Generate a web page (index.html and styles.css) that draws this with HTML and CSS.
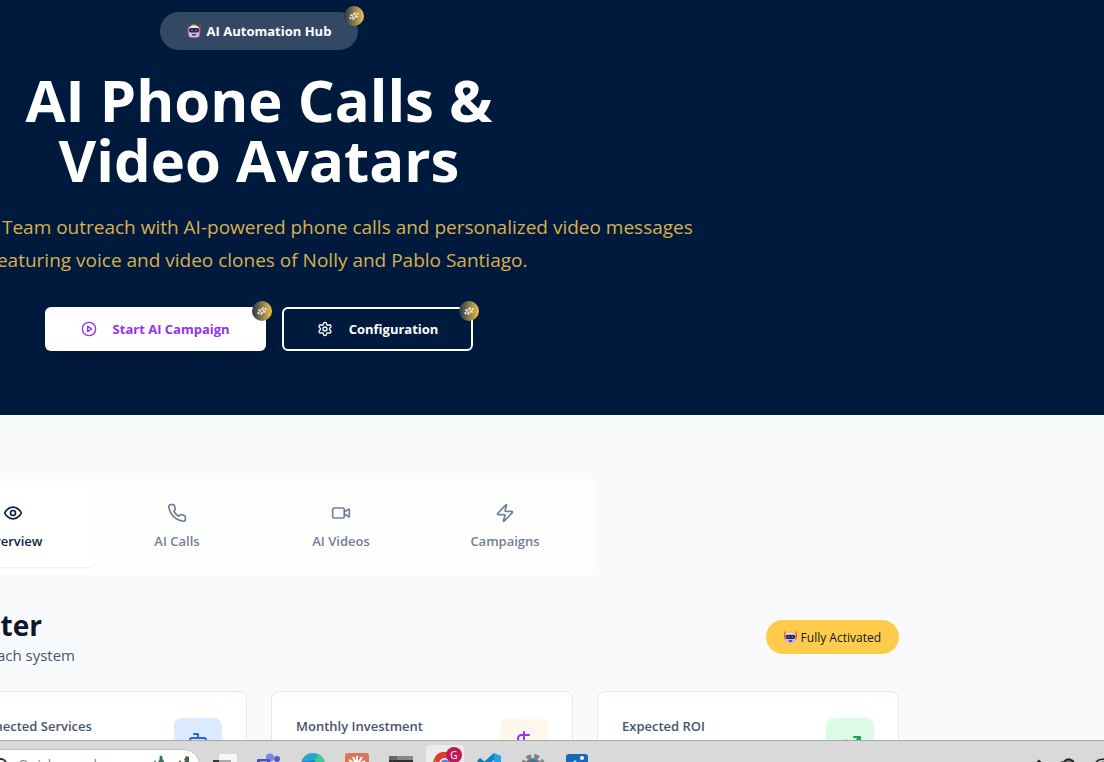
FILE: index.html
```html
<!DOCTYPE html>
<html lang="en">
<head>
<meta charset="utf-8">
<title>AI Automation Hub</title>
<link rel="stylesheet" href="styles.css">
</head>
<body>
<svg class="defs" aria-hidden="true">
  <symbol id="sparkle" viewBox="0 0 24 24"><g transform="rotate(105 12 12)" fill="none" stroke="currentColor" stroke-width="2.4" stroke-linecap="round" stroke-linejoin="round"><path d="m12 3-1.9 5.8a2 2 0 0 1-1.3 1.3L3 12l5.8 1.9a2 2 0 0 1 1.3 1.3L12 21l1.9-5.8a2 2 0 0 1 1.3-1.3L21 12l-5.8-1.9a2 2 0 0 1-1.3-1.3L12 3Z"/><path d="M5 3v4M19 17v4M3 5h4M17 19h4"/></g></symbol>
  <symbol id="robot" viewBox="0 0 28 28">
    <path d="M2 1v12M26 1v12" stroke="#d3245c" stroke-width="2"/>
    <path d="M1 9h4v11H3q-2-2-2-5zM27 9h-4v11h2q2-2 2-5z" fill="#c63868"/>
    <path d="M7 5q1-4 7-4t7 4z" fill="#f9b233"/>
    <rect x="3" y="4" width="22" height="23" rx="6" fill="#cdb6e6"/>
    <path d="M6 6q8-4 16 0v3H6z" fill="#eee4f8"/>
    <rect x="4" y="8" width="20" height="9" rx="4" fill="#29233f"/>
    <circle cx="10" cy="12.500" r="2" fill="#2f8cd8"/><circle cx="18" cy="12.500" r="2" fill="#2f8cd8"/>
    <rect x="10" y="20" width="8" height="3" rx="1.500" fill="#3b2a50"/>
  </symbol>
</svg>

<div class="screen">
  <header class="hero">
    <div class="container hero-inner">
      <div class="pill"><svg class="robot"><use href="#robot"/></svg>AI Automation Hub<span class="spark"><svg><use href="#sparkle"/></svg></span></div>
      <h1>AI Phone Calls &amp;<br>Video Avatars</h1>
      <p>Revolutionize every Team outreach with AI-powered phone calls and personalized video messages<br>featuring voice and video clones of Nolly and Pablo Santiago.</p>
      <div class="actions">
        <button class="btn primary" type="button"><svg class="line" viewBox="0 0 24 24"><circle cx="12" cy="12" r="10"/><path d="m10 8 6 4-6 4z"/></svg>Start AI Campaign<span class="spark"><svg><use href="#sparkle"/></svg></span></button>
        <button class="btn outline" type="button"><svg class="line" viewBox="0 0 24 24"><path d="M12.220 2h-.44a2 2 0 0 0-2 2v.18a2 2 0 0 1-1 1.730l-.43.25a2 2 0 0 1-2 0l-.15-.08a2 2 0 0 0-2.730.73l-.22.38a2 2 0 0 0 .73 2.730l.15.1a2 2 0 0 1 1 1.720v.51a2 2 0 0 1-1 1.740l-.15.09a2 2 0 0 0-.73 2.730l.22.38a2 2 0 0 0 2.730.73l.15-.08a2 2 0 0 1 2 0l.43.25a2 2 0 0 1 1 1.730V20a2 2 0 0 0 2 2h.44a2 2 0 0 0 2-2v-.18a2 2 0 0 1 1-1.730l.43-.25a2 2 0 0 1 2 0l.15.08a2 2 0 0 0 2.730-.73l.22-.39a2 2 0 0 0-.73-2.730l-.15-.08a2 2 0 0 1-1-1.740v-.5a2 2 0 0 1 1-1.740l.15-.09a2 2 0 0 0 .73-2.730l-.22-.38a2 2 0 0 0-2.730-.73l-.15.08a2 2 0 0 1-2 0l-.43-.25a2 2 0 0 1-1-1.730V4a2 2 0 0 0-2-2z"/><circle cx="12" cy="12" r="3"/></svg>Configuration<span class="spark"><svg><use href="#sparkle"/></svg></span></button>
      </div>
    </div>
  </header>

  <main class="container">
    <nav class="tabs" role="tablist" aria-label="Sections">
      <button class="tab active" type="button" role="tab" aria-selected="true"><svg class="line" viewBox="0 0 24 24"><path d="M2 12s3-7 10-7 10 7 10 7-3 7-10 7-10-7-10-7Z"/><circle cx="12" cy="12" r="3"/></svg>Overview</button>
      <button class="tab" type="button" role="tab" aria-selected="false"><svg class="line" viewBox="0 0 24 24"><path d="M22 16.920v3a2 2 0 0 1-2.180 2 19.790 19.790 0 0 1-8.630-3.070 19.500 19.500 0 0 1-6-6 19.790 19.790 0 0 1-3.070-8.670A2 2 0 0 1 4.110 2h3a2 2 0 0 1 2 1.720 12.840 12.840 0 0 0 .7 2.810 2 2 0 0 1-.45 2.110L8.090 9.910a16 16 0 0 0 6 6l1.270-1.270a2 2 0 0 1 2.110-.45 12.840 12.840 0 0 0 2.810.7A2 2 0 0 1 22 16.920z"/></svg>AI Calls</button>
      <button class="tab" type="button" role="tab" aria-selected="false"><svg class="line" viewBox="0 0 24 24"><path d="m16 13 5.220 3.480a.5.500 0 0 0 .78-.42V7.870a.5.500 0 0 0-.75-.43L16 10.500"/><rect x="2" y="6" width="14" height="12" rx="2"/></svg>AI Videos</button>
      <button class="tab" type="button" role="tab" aria-selected="false"><svg class="line" viewBox="0 0 24 24"><path d="M4 14a1 1 0 0 1-.78-1.630l9.900-10.200a.5.500 0 0 1 .86.460l-1.920 6.020A1 1 0 0 0 13 10h7a1 1 0 0 1 .78 1.630l-9.900 10.200a.5.500 0 0 1-.86-.46l1.920-6.020A1 1 0 0 0 11 14z"/></svg>Campaigns</button>
    </nav>

    <section class="section-head">
      <div>
        <h2>Command Center</h2>
        <p>of each system</p>
      </div>
      <span class="status"><svg class="robot"><use href="#robot"/></svg>Fully Activated</span>
    </section>

    <section class="cards">
      <article class="card"></article>
      <article class="card"><h3>Connected Services</h3><span class="tile blue"><svg class="line" viewBox="0 0 24 24"><path d="M12 8V4H8"/><rect x="4" y="8" width="16" height="12" rx="2"/><path d="M2 14h2M20 14h2M15 13v2M9 13v2"/></svg></span></article>
      <article class="card"><h3>Monthly Investment</h3><span class="tile cream"><svg class="line" viewBox="0 0 24 24"><path d="M12 2v20M17 5H9.500a3.500 3.500 0 0 0 0 7h5a3.500 3.500 0 0 1 0 7H6"/></svg></span></article>
      <article class="card"><h3>Expected ROI</h3><span class="tile green"><svg class="line" viewBox="0 0 24 24"><path d="m22 7-8.500 8.500-5-5L2 17M16 7h6v6"/></svg></span></article>
    </section>
  </main>
</div>

<footer class="taskbar">
  <div class="search">
    <svg class="lens" viewBox="0 0 14 14"><circle cx="8" cy="6" r="5" fill="none" stroke="#333" stroke-width="2"/></svg>
    <input type="text" aria-label="Search" placeholder="Quick search">
    <svg class="trees" viewBox="0 0 40 16">
      <path d="M4 8l3 6H1zM10 3l-2 3h1l-2 5h7l-3-5h1z" fill="#2f7650"/><path d="M10 10v5M5 13v3" stroke="#75452c" stroke-width="2"/>
      <path d="M14 16l4-5 4 5z" fill="#e9ad91"/><path d="M23 14l4-4 4 4z" fill="#d7a27c"/>
      <path d="M35 4l-2 4h1l-2 5h6V5zM29 8l-3 5h6z" fill="#3d6843"/><path d="M35 11v5" stroke="#693b28" stroke-width="2"/>
    </svg>
  </div>
  <div class="apps">
    <span class="app"><svg viewBox="0 0 24 24"><rect x="6" y="1" width="18" height="15" fill="#f6f6f6"/><rect y="7" width="18" height="14" fill="#383838"/><rect x="6" y="7" width="12" height="9" fill="#aaa"/></svg></span>
    <span class="app"><svg viewBox="0 0 24 24"><circle cx="13" cy="4.500" r="4" fill="#7b83eb"/><circle cx="20" cy="6" r="3" fill="#5059c9"/><path d="M9 9h15v9H9z" fill="#7078dd"/><rect y="6" width="13" height="13" rx="1" fill="#4650bb"/><path d="M3 9.500h7M6.500 9.500V16" stroke="#fff" stroke-width="2"/></svg></span>
    <span class="app"><svg viewBox="0 0 24 24"><circle cx="12" cy="12" r="12" fill="#1688cc"/><path d="M5 2C12-3 24 1 24 12q-2 6-8 4C17 8 11 4 5 2z" fill="#48c991"/><path d="M1 8C4 0 13-1 18 2q-4 7-17 6z" fill="#2ba5cf"/></svg></span>
    <span class="app"><svg viewBox="0 0 24 24"><rect width="24" height="24" rx="3" fill="#d97757"/><path d="M12 12V3M12 12L8 4M12 12l5-8M12 12L4 7M12 12l8-4" stroke="#fff" stroke-width="2"/></svg></span>
    <span class="app"><svg viewBox="0 0 24 24"><rect y="3" width="24" height="20" fill="#303030"/><path d="M0 3h24v4H0z" fill="#888"/><path d="M0 3h8v4H0z" fill="#666"/><path d="M3 9l4 3" stroke="#fff"/></svg></span>
    <span class="app current"><svg viewBox="0 0 24 24"><circle cx="12" cy="12" r="12" fill="#fbc116"/><path d="M1 7A12 12 0 0 1 23 7H12a5 5 0 0 0-5 7z" fill="#e33b2e"/><path d="M1 7l8 14q-9-4-9-10z" fill="#299c4b"/><circle cx="12" cy="12" r="6" fill="#fff"/><circle cx="12" cy="12" r="4.500" fill="#4285f4"/></svg><b class="profile">G</b></span>
    <span class="app"><svg viewBox="0 0 24 24"><path d="M17 0l7 3v18l-7 3L6 13z" fill="#23a2e8"/><path d="M17 6v12l-7-6z" fill="#d9d9d9"/><path d="M0 8l3-3 15 12v7z" fill="#0879bd"/><path d="M0 15L17 0v7L3 18z" fill="#0c83cc"/></svg></span>
    <span class="app"><svg viewBox="0 0 24 24"><circle cx="12" cy="13" r="10" fill="none" stroke="#7e858b" stroke-width="4" stroke-dasharray="5 3"/><circle cx="12" cy="13" r="8" fill="#737b82"/><circle cx="12" cy="13" r="5" fill="#bfe1fa" stroke="#2675b5" stroke-width="2"/></svg></span>
    <span class="app"><svg viewBox="0 0 24 24"><rect x="1" y="1" width="22" height="22" rx="3" fill="#1768bb"/><circle cx="17" cy="5" r="2" fill="#fff"/><path d="M1 16L10 7l13 14H1z" fill="#a9dcff"/></svg></span>
  </div>
  <svg class="tray" viewBox="0 0 74 22"><path d="M5 24l4-4 4 4" fill="none" stroke="#222" stroke-width="2"/><path d="M30 24q0-3 4-3 3-4 7-2 3 1 3 5" fill="#888" stroke="#222" stroke-width="2"/><path d="M65 24q2-8 13-5M68 24q3-4 10-2" fill="none" stroke="#222" stroke-width="1.500"/></svg>
</footer>
</body>
</html>
```

FILE: styles.css
```css
* { box-sizing: border-box; }
body {
  margin: 0;
  height: 100vh;
  display: flex;
  flex-direction: column;
  overflow: hidden;
  background: #f9fafc;
  color: #0f172a;
  font-family: "Open Sans", "Noto Sans", sans-serif;
}
h1, h2, h3, p { margin: 0; }
button { font: inherit; border: 0; }
.defs { position: absolute; width: 0; height: 0; }
.line { fill: none; stroke: currentColor; stroke-width: 2; stroke-linecap: round; stroke-linejoin: round; }

.screen { flex: 1; min-height: 0; overflow: hidden; }
/* The page is panned sideways: its column starts left of the window. */
.container { margin-left: -381px; margin-right: 205px; }

.hero { background: #001a3d; color: #fff; padding: 12px 0 64px; }
.hero-inner { display: flex; flex-direction: column; align-items: center; text-align: center; }
.pill {
  position: relative;
  display: flex;
  align-items: center;
  gap: 6px;
  height: 38px;
  padding: 0 27px;
  border-radius: 19px;
  background: #334863;
  font-size: 13px;
  font-weight: 700;
}
.robot { width: 14px; height: 14px; }
.spark {
  position: absolute;
  top: -6px;
  right: -6px;
  display: grid;
  place-items: center;
  width: 20px;
  height: 20px;
  border-radius: 50%;
  background: linear-gradient(90deg, #23364b, #f0c04c);
  color: #f3efe4;
}
.spark svg { width: 10px; height: 10px; }
.hero h1 { margin-top: 20px; font-size: 58px; line-height: 60px; font-weight: 700; }
.hero p { margin-top: 21px; font-size: 19px; line-height: 33px; color: #d8b04c; white-space: nowrap; }
.actions { display: flex; gap: 16px; margin-top: 30px; }
.btn {
  position: relative;
  display: flex;
  align-items: center;
  gap: 16px;
  height: 44px;
  padding: 0 36px;
  border-radius: 6px;
  font-size: 13px;
  font-weight: 700;
}
.btn .line { width: 16px; height: 16px; }
.primary { background: #fff; color: #9333ea; box-shadow: 0 8px 16px rgba(0, 0, 0, .15); }
.outline { background: transparent; color: #fff; border: 2px solid #fff; padding: 0 33px; }
.outline .spark { top: -8px; right: -8px; }

.tabs {
  display: grid;
  grid-template-columns: repeat(4, 1fr);
  max-width: 672px;
  margin: 64px auto 0;
  padding: 8px;
  border-radius: 8px;
  background: #fefefe;
}
.tab {
  display: flex;
  flex-direction: column;
  align-items: center;
  justify-content: center;
  gap: 8px;
  height: 80px;
  border-radius: 6px;
  background: transparent;
  color: #718096;
  font-size: 13px;
  line-height: 20px;
  font-weight: 600;
}
.tab .line { width: 20px; height: 20px; }
.tab.active { background: #fff; color: #0b1f42; box-shadow: 0 1px 2px rgba(0, 0, 0, .06); }

.section-head { display: flex; justify-content: space-between; align-items: center; margin-top: 32px; }
.section-head h2 { width: 423px; text-align: right; font-size: 28px; line-height: 36px; }
.section-head p { width: 456px; text-align: right; font-size: 15px; line-height: 24px; color: #475569; }
.status {
  display: flex;
  align-items: center;
  gap: 4px;
  height: 34px;
  padding: 0 18px;
  border-radius: 17px;
  background: #ffcb4a;
  font-size: 12px;
  font-weight: 500;
}
.status .robot { width: 13px; height: 13px; }
.cards { display: grid; grid-template-columns: repeat(4, 1fr); gap: 24px; margin-top: 24px; }
.card {
  display: flex;
  align-items: flex-start;
  justify-content: space-between;
  min-height: 102px;
  padding: 24px;
  border: 1px solid #e2e8f0;
  border-radius: 8px;
  background: #fff;
}
.card h3 { font-size: 13px; line-height: 20px; font-weight: 600; color: #475569; }
.tile { display: grid; place-items: center; width: 48px; height: 48px; margin-top: 2px; border-radius: 8px; }
.tile .line { width: 24px; height: 24px; }
.blue { background: #dbeafe; color: #2563eb; }
.cream { background: #fff7eb; color: #9333ea; }
.green { background: #dcfce7; color: #16a34a; }

.taskbar {
  display: flex;
  align-items: flex-start;
  height: 22px;
  overflow: hidden;
  border-top: 1px solid #a9a9a9;
  background: #d9d9d9;
}
.search {
  display: flex;
  width: 240px;
  height: 32px;
  margin: 8px 3px 0 -40px;
  padding-left: 32px;
  border: 1px solid #c4c4c4;
  border-radius: 16px;
  background: #fff;
}
.lens { width: 14px; height: 14px; margin-top: 8px; }
.search input {
  flex: 1;
  min-width: 0;
  height: 28px;
  padding: 0 0 0 11px;
  border: 0;
  background: transparent;
  font: 14px "Open Sans", sans-serif;
}
.search input::placeholder { color: #808080; }
.trees { width: 40px; height: 16px; margin: 2px 8px 0 0; }
.apps { display: flex; }
.app { position: relative; width: 44px; height: 40px; padding: 12px 10px 0; }
.app svg { display: block; width: 24px; height: 24px; }
.app.current { width: 38px; margin: 4px 3px 0; padding: 7px 7px 0; border-radius: 4px 4px 0 0; background: #ececec; }
.profile {
  position: absolute;
  top: 2px;
  right: 2px;
  width: 16px;
  height: 16px;
  border-radius: 50%;
  background: #c2185b;
  color: #fff;
  font: 10px/16px "Open Sans", sans-serif;
  text-align: center;
}
.tray { width: 74px; height: 22px; margin-left: auto; }
```
